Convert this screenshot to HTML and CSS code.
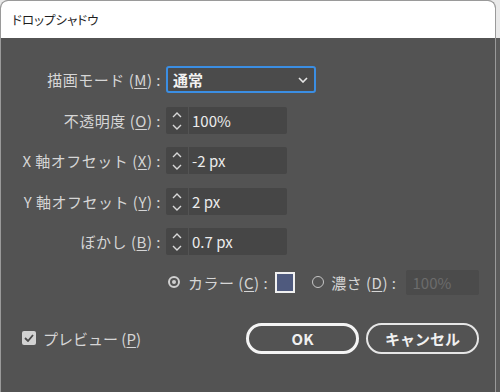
FILE: index.html
```html
<!DOCTYPE html>
<html lang="ja">
<head>
<meta charset="utf-8">
<title>ドロップシャドウ</title>
<link rel="stylesheet" href="styles.css">
</head>
<body>
<div class="window">
  <div class="titlebar">ドロップシャドウ</div>
  <div class="content">
    <div class="form">
      <label class="lbl">描画モード (<u>M</u>) :</label>
      <div class="select">
        <span class="select-val">通常</span>
        <svg class="chev" width="10" height="6" viewBox="0 0 10 6"><path d="M1 1l4 4 4-4" fill="none" stroke="#e6e6e6" stroke-width="1.6"/></svg>
      </div>

      <label class="lbl">不透明度 (<u>O</u>) :</label>
      <div class="spin">
        <div class="arrows">
          <svg width="10" height="6" viewBox="0 0 10 6"><path d="M1 5l4-4 4 4" fill="none" stroke="#d8d8d8" stroke-width="1.4"/></svg>
          <svg width="10" height="6" viewBox="0 0 10 6"><path d="M1 1l4 4 4-4" fill="none" stroke="#d8d8d8" stroke-width="1.4"/></svg>
        </div>
        <div class="field">100%</div>
      </div>

      <label class="lbl">X 軸オフセット (<u>X</u>) :</label>
      <div class="spin">
        <div class="arrows">
          <svg width="10" height="6" viewBox="0 0 10 6"><path d="M1 5l4-4 4 4" fill="none" stroke="#d8d8d8" stroke-width="1.4"/></svg>
          <svg width="10" height="6" viewBox="0 0 10 6"><path d="M1 1l4 4 4-4" fill="none" stroke="#d8d8d8" stroke-width="1.4"/></svg>
        </div>
        <div class="field">-2 px</div>
      </div>

      <label class="lbl">Y 軸オフセット (<u>Y</u>) :</label>
      <div class="spin">
        <div class="arrows">
          <svg width="10" height="6" viewBox="0 0 10 6"><path d="M1 5l4-4 4 4" fill="none" stroke="#d8d8d8" stroke-width="1.4"/></svg>
          <svg width="10" height="6" viewBox="0 0 10 6"><path d="M1 1l4 4 4-4" fill="none" stroke="#d8d8d8" stroke-width="1.4"/></svg>
        </div>
        <div class="field">2 px</div>
      </div>

      <label class="lbl">ぼかし (<u>B</u>) :</label>
      <div class="spin">
        <div class="arrows">
          <svg width="10" height="6" viewBox="0 0 10 6"><path d="M1 5l4-4 4 4" fill="none" stroke="#d8d8d8" stroke-width="1.4"/></svg>
          <svg width="10" height="6" viewBox="0 0 10 6"><path d="M1 1l4 4 4-4" fill="none" stroke="#d8d8d8" stroke-width="1.4"/></svg>
        </div>
        <div class="field">0.7 px</div>
      </div>

      <div class="spacer"></div>
      <div class="colorrow">
        <span class="radio on"></span>
        <span class="opt wide">カラー (<u>C</u>) :</span>
        <span class="swatch"></span>
        <span class="radio"></span>
        <span class="opt wide">濃さ (<u>D</u>) :</span>
        <div class="field disabled">100%</div>
      </div>
    </div>

    <div class="footer">
      <div class="check">
        <span class="box"><svg width="10" height="8" viewBox="0 0 10 8"><path d="M1 4l3 3 5-6" fill="none" stroke="#4a4a4a" stroke-width="1.8"/></svg></span>
        <span class="opt">プレビュー (<u>P</u>)</span>
      </div>
      <div class="buttons">
        <button class="btn primary">OK</button>
        <button class="btn">キャンセル</button>
      </div>
    </div>
  </div>
</div>
</body>
</html>
```
FILE: styles.css
```css
html, body {
  margin: 0;
  padding: 0;
  width: 500px;
  height: 392px;
  overflow: hidden;
}
body {
  background: linear-gradient(#e9e9e9 0, #e9e9e9 38px, #5b5b5b 38px);
  font-family: "Noto Sans CJK JP", "Noto Sans", sans-serif;
}
.window {
  box-sizing: border-box;
  width: 496px;
  height: 392px;
  border: 1px solid #9a9a9a;
  border-bottom: none;
  border-radius: 8px 8px 0 0;
  overflow: hidden;
  display: flex;
  flex-direction: column;
  background: #535353;
}
.titlebar {
  height: 37px;
  background: #ffffff;
  color: #1e1e1e;
  font-size: 12.5px;
  line-height: 37px;
  padding-left: 11px;
  font-feature-settings: "palt";
}
.content {
  display: flex;
  flex-direction: column;
  padding-top: 28px;
  flex: 1;
}
.form {
  display: grid;
  grid-template-columns: 160px auto;
  column-gap: 5px;
  row-gap: 13.5px;
  grid-auto-rows: 27px;
  align-items: center;
}
.lbl, .opt {
  color: #d6d6d6;
  font-size: 15px;
  white-space: nowrap;
}
.lbl, .opt.wide {
  letter-spacing: 0.5px;
}
.lbl {
  text-align: right;
}
u {
  text-decoration-thickness: 1px;
  text-underline-offset: 2px;
}
.select {
  box-sizing: border-box;
  width: 150px;
  height: 27px;
  border: 2px solid #3b8ee3;
  border-radius: 3px;
  background: #4b4b4b;
  display: flex;
  align-items: center;
  justify-content: space-between;
  padding: 0 6px 0 5px;
  color: #f2f2f2;
  font-size: 15px;
  font-weight: 700;
}
.chev {
  margin-top: 1px;
}
.spin {
  display: flex;
  width: 121px;
  height: 27px;
  gap: 1px;
}
.arrows {
  box-sizing: border-box;
  width: 22px;
  height: 27px;
  background: #464646;
  border-radius: 2px 0 0 2px;
  display: flex;
  flex-direction: column;
  align-items: center;
  justify-content: space-between;
  padding: 5px 0 4px;
}
.field {
  box-sizing: border-box;
  flex: 1;
  height: 27px;
  background: #464646;
  border-radius: 0 2px 2px 0;
  color: #ececec;
  font-size: 15px;
  line-height: 27px;
  padding-left: 3px;
}
.spacer {
  height: 27px;
}
.colorrow {
  display: flex;
  align-items: center;
  height: 27px;
  margin-left: 2px;
}
.radio {
  box-sizing: border-box;
  width: 12px;
  height: 12px;
  border-radius: 50%;
  border: 1.5px solid #c6c6c6;
  margin-right: 7px;
  position: relative;
}
.radio.on {
  border: 2px solid #d0d0d0;
  background: #535353;
  margin-right: 8px;
}
.radio.on::after {
  content: "";
  position: absolute;
  left: 2px;
  top: 2px;
  width: 4px;
  height: 4px;
  border-radius: 50%;
  background: #d0d0d0;
}
.swatch {
  box-sizing: border-box;
  width: 20px;
  height: 21px;
  border: 2px solid #f0f0f0;
  background: #4f5a7e;
  margin-left: 7px;
  margin-right: 17px;
}
.field.disabled {
  flex: none;
  width: 73px;
  height: 25px;
  line-height: 25px;
  margin-left: 9px;
  border-radius: 2px;
  color: #6c6c6c;
  background: #4b4b4b;
  padding-left: 7px;
}
.footer {
  display: flex;
  align-items: center;
  justify-content: space-between;
  margin-top: 27px;
  padding-left: 21px;
  padding-right: 16px;
}
.check {
  display: flex;
  align-items: center;
  gap: 7px;
}
.box {
  box-sizing: border-box;
  width: 14px;
  height: 14px;
  background: #d2d2d2;
  border-radius: 2px;
  display: flex;
  align-items: center;
  justify-content: center;
}
.buttons {
  display: flex;
  gap: 7px;
}
.btn {
  box-sizing: border-box;
  width: 113px;
  height: 31px;
  border-radius: 16px;
  border: 2px solid #e6e6e6;
  background: #535353;
  color: #f0f0f0;
  font-family: inherit;
  font-size: 15px;
  font-weight: 700;
  padding: 0;
}
.btn.primary {
  border: 3px solid #f4f4f4;
}
```
